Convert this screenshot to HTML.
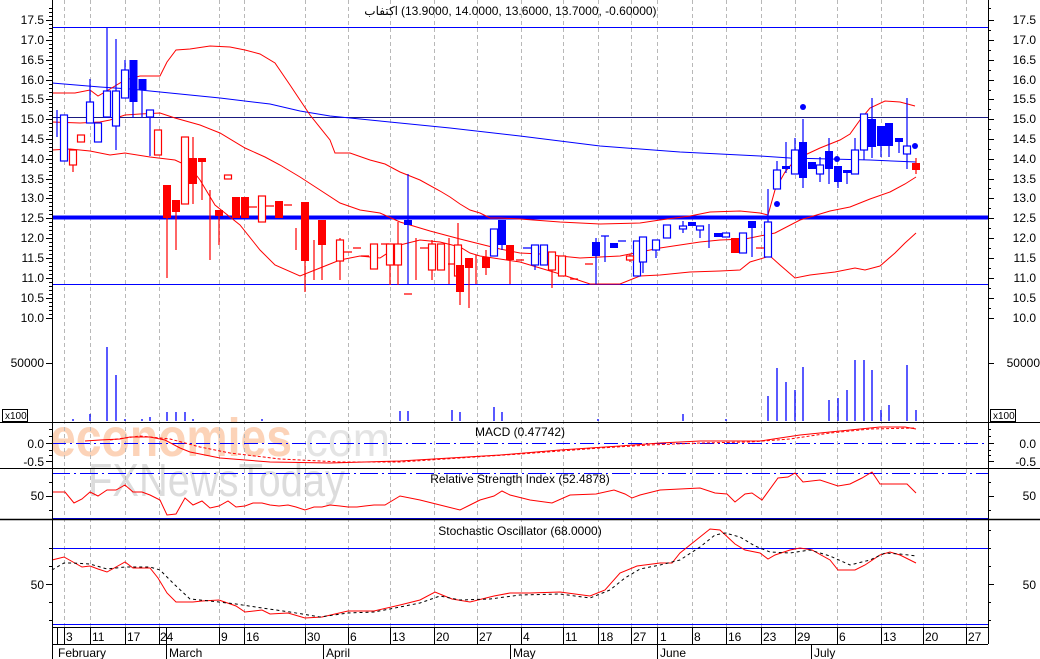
<!DOCTYPE html>
<html><head><meta charset="utf-8"><style>
html,body{margin:0;padding:0;background:#fff;width:1040px;height:659px;overflow:hidden}
svg{display:block;font-family:"Liberation Sans","Noto Sans CJK SC",sans-serif}
</style></head><body>
<svg width="1040" height="659" viewBox="0 0 1040 659" xmlns="http://www.w3.org/2000/svg">
<!-- watermark -->
<text x="50" y="456" font-size="54" fill="#fcd3b8" font-weight="bold" textLength="242" lengthAdjust="spacingAndGlyphs">economies</text>
<text x="293" y="456" font-size="48" fill="#e4e4e4" textLength="97" lengthAdjust="spacingAndGlyphs">.com</text>
<text x="88" y="496" font-size="46" fill="#dcdcdc" textLength="257" lengthAdjust="spacingAndGlyphs">FXNewsToday</text>

<!-- vertical grid -->
<g stroke="#b8b8b8" stroke-dasharray="4,3" stroke-width="1">
<path d="M64.5 0V627M90.5 0V627M125.5 0V627M159.5 0V627M219.5 0V627M244.5 0V627M305.5 0V627M348.5 0V627M390.5 0V627M434.5 0V627M477.5 0V627M521.5 0V627M563.5 0V627M598.5 0V627M631.5 0V627M657.5 0V627M692.5 0V627M726.5 0V627M761.5 0V627M795.5 0V627M837.5 0V627M881.5 0V627M923.5 0V627M966.5 0V627"/>
</g>

<!-- horizontal level lines -->
<g stroke="#0000ff">
<line x1="52" y1="27.5" x2="988" y2="27.5"/>
<line x1="52" y1="117.5" x2="988" y2="117.5" stroke="#1a1a80"/>
<line x1="52" y1="217.5" x2="988" y2="217.5" stroke-width="4"/>
<line x1="52" y1="284.5" x2="988" y2="284.5"/>
</g>

<!-- MA and bands -->
<polyline fill="none" stroke="#0000ff" points="52,83 100,87 130,89 160,92 220,98 270,104 300,111 330,116 380,121 450,128 520,136 600,146 680,152 760,156 790,158 870,160 916,162"/>
<g fill="none" stroke="#ff0000">
<polyline points="52,93 75,93 90,90 98,96 110,89 125,80 140,76 160,76 167,62 176,50 190,49 210,46 230,47 245,50 260,54 275,63 290,85 300,100 310,115 330,140 335,153 350,153 370,160 385,164 400,172 420,180 440,191 450,197 460,204 470,210 480,213 490,218 500,218 520,219 560,222 600,224 640,223 660,220 690,216 710,212 740,211 760,213 768,215 775,190 785,172 795,160 805,155 820,148 840,140 850,134 860,120 870,108 885,101 900,102 915,106"/>
<polyline points="52,122 80,123 100,122 110,120 125,115 140,114 160,113 175,118 200,125 220,133 245,148 265,157 280,165 300,177 320,190 340,203 360,210 380,213 400,222 430,231 460,239 480,244 500,249 520,253 540,254 580,258 620,256 640,252 660,248 680,245 700,242 720,240 745,239 765,235 775,233 800,220 830,211 850,207 870,199 890,192 905,184 916,177"/>
<polyline points="52,150 70,149 90,151 110,155 125,153 150,157 175,160 190,167 200,180 215,205 240,225 260,250 275,265 300,276 320,268 340,260 360,256 380,258 400,245 420,240 440,242 460,247 470,253 480,256 520,262 560,274 590,284 620,284 640,276 660,275 690,272 720,271 740,270 750,262 770,256 780,265 795,278 810,275 835,272 855,268 865,270 880,266 895,253 905,243 916,233"/>
</g>

<!-- candles: blue -->
<g stroke="#0000ff" stroke-width="1.2">
<path d="M57 110V137M64 115V161M90 79V123M98 123V142M107 28V117M116 39V150M125 60V98M133 60V118M142 79V118M150 110V156M408 174V284M494 229V256M502 220V250M527 248V248M535 245V270M544 245V265M596 238V284M605 236V262M614 243V248M637 241V276M643 237V273M656 240V258M667 225V238M683 221V233M692 222V226M700 226V238M709 224V248M718 233V237M726 233V237M743 233V253M752 221V257M768 189V257M777 161V189M786 142V173M795 138V174M803 119V188M812 162V169M820 157V182M829 138V184M838 166V188M847 170V184M855 138V174M864 114V160M872 98V158M881 126V157M889 123V157M899 138V153M907 98V169"/>
<path d="M523 248H531M601 236H609M618 241H626" />
</g>
<g stroke="#0000ff" fill="#fff" stroke-width="1.2">
<rect x="60.5" y="115" width="7" height="46"/><rect x="86.5" y="102" width="7" height="21"/><rect x="94.5" y="123" width="7" height="19"/><rect x="103.5" y="91" width="7" height="26"/><rect x="112.5" y="91" width="7" height="35"/><rect x="121.5" y="70" width="7" height="28"/><rect x="146.5" y="110" width="7" height="7"/>
<rect x="490.5" y="229" width="7" height="27"/><rect x="531.5" y="245" width="7" height="20"/><rect x="540.5" y="245" width="7" height="20"/><rect x="633.5" y="241" width="7" height="35"/><rect x="639.5" y="237" width="7" height="25"/><rect x="652.5" y="240" width="7" height="10"/><rect x="663.5" y="225" width="7" height="13"/><rect x="679.5" y="226" width="7" height="3"/><rect x="696.5" y="226" width="7" height="4"/><rect x="722.5" y="233" width="7" height="4"/><rect x="739.5" y="233" width="7" height="20"/><rect x="764.5" y="222" width="7" height="35"/><rect x="773.5" y="170" width="7" height="19"/><rect x="791.5" y="150" width="7" height="24"/><rect x="816.5" y="165" width="7" height="9"/><rect x="851.5" y="150" width="7" height="24"/><rect x="860.5" y="114" width="7" height="36"/><rect x="903.5" y="146" width="7" height="8"/>
</g>
<g fill="#0000ff">
<rect x="129.5" y="60" width="8" height="42"/><rect x="138.5" y="79" width="8" height="11"/><rect x="404" y="220" width="8" height="5"/><rect x="498" y="220" width="8" height="25"/><rect x="592" y="242" width="8" height="14"/><rect x="610" y="243" width="8" height="5"/><rect x="688" y="222" width="8" height="4"/><rect x="714" y="233" width="8" height="4"/><rect x="748" y="221" width="8" height="7"/><rect x="782" y="166" width="8" height="3"/><rect x="799" y="142" width="8" height="36"/><rect x="808" y="162" width="8" height="7"/><rect x="825" y="151" width="8" height="18"/><rect x="834" y="166" width="8" height="16"/><rect x="843" y="170" width="8" height="3"/><rect x="868" y="119" width="8" height="28"/><rect x="877" y="126" width="8" height="20"/><rect x="885" y="123" width="8" height="23"/><rect x="895" y="138" width="8" height="4"/>
<circle cx="803" cy="107" r="3"/><circle cx="777" cy="204" r="3"/><circle cx="837" cy="159" r="3"/><circle cx="915" cy="146" r="3"/>
</g>

<!-- candles: red -->
<g stroke="#ff0000" stroke-width="1.2">
<path d="M73 150V172M167 185V278M176 200V250M185 137V204M193 137V204M202 158V200M210 190V260M219 210V245M236 197V218M245 197V218M262 196V222M279 201V218M296 228V250M305 202V292M314 240V280M322 220V280M340 238V280M390 244V285M398 222V285M416 238V280M432 240V280M441 244V270M449 238V284M458 223V284M460 253V305M469 258V308M476 255V284M486 250V275M510 245V284M552 252V288M562 256V276M630 254V262M735 238V253M916 158V174"/>
<path d="M249 207H257M266 206H274M284 205H292M344 252H352M353 248H361M361 256H369M381 244H389M404 294H412M420 248H428M448 264H456M516 260H524M570 279H578M585 264H593M756 248H764"/>
</g>
<g stroke="#ff0000" fill="#fff" stroke-width="1.2">
<rect x="69.5" y="150" width="7" height="15"/><rect x="77.5" y="135" width="7" height="7"/><rect x="154.5" y="130" width="7" height="25"/><rect x="181.5" y="137" width="7" height="67"/><rect x="224.5" y="175" width="7" height="4"/><rect x="258.5" y="196" width="7" height="26"/><rect x="336.5" y="240" width="7" height="21"/><rect x="370.5" y="244" width="7" height="25"/><rect x="386.5" y="244" width="7" height="21"/><rect x="394.5" y="244" width="7" height="21"/><rect x="428.5" y="244" width="7" height="26"/><rect x="437.5" y="244" width="7" height="26"/><rect x="454.5" y="245" width="7" height="31"/><rect x="548.5" y="252" width="7" height="18"/><rect x="558.5" y="256" width="7" height="20"/><rect x="626.5" y="256" width="7" height="4"/>
</g>
<g fill="#ff0000">
<rect x="163" y="185" width="8" height="33"/><rect x="172" y="200" width="8" height="12"/><rect x="189" y="158" width="8" height="26"/><rect x="198" y="158" width="8" height="4"/><rect x="215" y="210" width="8" height="6"/><rect x="232" y="197" width="8" height="21"/><rect x="241" y="197" width="8" height="21"/><rect x="275" y="201" width="8" height="17"/><rect x="301" y="202" width="8" height="59"/><rect x="318" y="220" width="8" height="25"/><rect x="456" y="265" width="8" height="27"/><rect x="465" y="258" width="8" height="10"/><rect x="482" y="257" width="8" height="11"/><rect x="506" y="245" width="8" height="15"/><rect x="731" y="238" width="8" height="15"/><rect x="912" y="163" width="8" height="7"/>
</g>

<!-- volume -->
<g stroke="#0000ff" stroke-width="1.3">
<path d="M90 414V421M107 347V421M116 375V421M150 417V421M167 412V421M176 412V421M185 412V421M400 411V421M408 411V421M452 410V421M460 412V421M494 407V421M502 412V421M683 414V421M768 396V421M777 368V421M786 382V421M795 390V421M803 367V421M829 400V421M838 398V421M847 390V421M855 360V421M864 360V421M872 370V421M881 410V421M889 405V421M907 365V421M916 410V421M73 419V421M125 419V421M142 419V421M193 419V421M262 419V421M598 419V421M726 419V421"/>
</g>

<!-- MACD -->
<line x1="52" y1="443.5" x2="988" y2="443.5" stroke="#0000ff" stroke-dasharray="14,4,2,4"/>
<polyline fill="none" stroke="#ff0000" points="85,441 100,440 120,439 130,437 150,437 165,440 180,448 190,452 220,458 270,462 330,463 400,461 450,458 500,455 560,450 620,446 660,443 700,441 760,441 780,438 800,435 850,430 880,427 905,427 916,429"/>
<polyline fill="none" stroke="#ff0000" stroke-dasharray="3,2" points="110,440 140,436 170,439 200,447 230,453 280,459 340,462 400,462 460,458 520,454 600,448 650,445 700,443 750,442 790,439 830,433 870,429 916,428"/>

<!-- RSI -->
<line x1="52" y1="473.5" x2="988" y2="473.5" stroke="#0000ff" stroke-dasharray="18,4,2,4"/>
<line x1="52" y1="518.5" x2="988" y2="518.5" stroke="#0000ff"/>
<polyline fill="none" stroke="#ff0000" points="52,492 65,492 74,503 82,499 90,492 98,496 107,490 116,490 125,485 133,492 142,492 150,495 160,500 167,515 176,514 185,498 193,505 202,501 210,508 219,506 228,501 236,507 245,506 253,503 262,503 270,505 279,506 288,505 296,507 305,510 314,507 322,507 330,505 340,506 348,507 357,507 365,506 374,505 385,505 400,496 420,500 440,505 460,510 470,505 480,500 494,496 502,491 510,495 530,500 552,503 570,495 596,494 614,490 625,494 632,498 640,495 660,490 700,488 715,493 727,494 735,502 745,494 752,493 762,500 778,478 788,477 795,473 803,482 820,480 838,486 850,484 862,478 872,472 880,484 889,484 896,484 907,484 916,493"/>

<!-- Stochastic -->
<line x1="52" y1="548.5" x2="988" y2="548.5" stroke="#0000ff"/>
<line x1="52" y1="624.5" x2="988" y2="624.5" stroke="#0000ff"/>
<polyline fill="none" stroke="#ff0000" points="52,560 64,557 73,562 82,567 90,566 98,569 107,572 116,567 125,562 133,568 150,568 158,578 167,593 176,602 193,602 202,601 219,600 236,606 245,612 262,610 270,614 288,613 305,618 322,617 348,611 374,611 400,605 420,600 435,592 452,599 470,602 494,596 510,593 530,593 560,592 590,596 605,590 620,573 637,566 660,563 672,563 680,553 700,537 710,529 720,530 735,544 745,550 760,553 768,559 775,555 790,550 800,548 812,550 830,560 838,570 855,570 865,565 880,555 890,552 900,555 916,563"/>
<polyline fill="none" stroke="#000" stroke-dasharray="3,3" points="52,570 64,563 73,563 90,564 107,569 125,567 150,567 160,570 175,585 190,599 210,601 236,604 262,608 290,612 320,617 348,613 374,612 400,607 420,603 440,596 460,600 490,599 520,595 560,594 590,598 610,590 625,578 640,569 660,565 680,560 700,547 715,535 725,533 740,537 755,546 770,552 790,553 810,550 830,556 850,565 870,560 885,553 900,554 916,556"/>

<!-- panel borders -->
<g stroke="#000" stroke-width="1">
<line x1="0" y1="422.5" x2="1040" y2="422.5"/>
<line x1="0" y1="468.5" x2="1040" y2="468.5"/>
<line x1="0" y1="519.5" x2="1040" y2="519.5" stroke-width="1.5"/>
<line x1="52.5" y1="0" x2="52.5" y2="659"/>
<line x1="988.5" y1="0" x2="988.5" y2="627"/>
<line x1="52" y1="627.5" x2="988" y2="627.5"/>
<line x1="52" y1="644.5" x2="988" y2="644.5"/>
</g>
<!-- ticks left/right -->
<g stroke="#000">
<path d="M46 20.5h6M46 40.5h6M46 60.5h6M46 80.5h6M46 99.5h6M46 119.5h6M46 139.5h6M46 159.5h6M46 179.5h6M46 198.5h6M46 218.5h6M46 238.5h6M46 258.5h6M46 278.5h6M46 298.5h6M46 318.5h6M49 8.5h3M49 12.5h3M49 16.5h3M49 24.5h3M49 28.5h3M49 32.5h3M49 36.5h3M49 44.5h3M49 48.5h3M49 52.5h3M49 56.5h3M49 64.5h3M49 68.5h3M49 72.5h3M49 76.5h3M49 84.5h3M49 88.5h3M49 92.5h3M49 96.5h3M49 103.5h3M49 107.5h3M49 111.5h3M49 115.5h3M49 123.5h3M49 127.5h3M49 131.5h3M49 135.5h3M49 143.5h3M49 147.5h3M49 151.5h3M49 155.5h3M49 163.5h3M49 167.5h3M49 171.5h3M49 175.5h3M49 183.5h3M49 187.5h3M49 191.5h3M49 195.5h3M49 202.5h3M49 206.5h3M49 210.5h3M49 214.5h3M49 222.5h3M49 226.5h3M49 230.5h3M49 234.5h3M49 242.5h3M49 246.5h3M49 250.5h3M49 254.5h3M49 262.5h3M49 266.5h3M49 270.5h3M49 274.5h3M49 282.5h3M49 286.5h3M49 290.5h3M49 294.5h3M49 302.5h3M49 306.5h3M49 310.5h3M49 314.5h3M46 363.5h6M46 443.5h6M46 461.5h6M46 496.5h6M46 584.5h6M49 429.5h3M49 436.5h3M49 450.5h3M49 455.5h3M49 482.5h3M49 510.5h3M49 548.5h3M49 566.5h3M49 602.5h3M49 620.5h3"/>
<path d="M988 20.5h6M988 40.5h6M988 60.5h6M988 80.5h6M988 99.5h6M988 119.5h6M988 139.5h6M988 159.5h6M988 179.5h6M988 198.5h6M988 218.5h6M988 238.5h6M988 258.5h6M988 278.5h6M988 298.5h6M988 318.5h6M988 363.5h6M988 443.5h6M988 461.5h6M988 496.5h6M988 584.5h6M988 8.5h3M988 30.5h3M988 50.5h3M988 70.5h3M988 90.5h3M988 109.5h3M988 129.5h3M988 149.5h3M988 169.5h3M988 188.5h3M988 208.5h3M988 228.5h3M988 248.5h3M988 268.5h3M988 288.5h3M988 308.5h3M988 429.5h3M988 436.5h3M988 450.5h3M988 455.5h3M988 482.5h3M988 510.5h3M988 530.5h3M988 548.5h3M988 566.5h3M988 602.5h3M988 620.5h3"/>
</g>
<!-- x100 boxes -->
<rect x="2.5" y="409.5" width="25" height="12" fill="#fff" stroke="#000"/>
<text x="5" y="419" font-size="10">x100</text>
<rect x="990.5" y="409.5" width="25" height="12" fill="#fff" stroke="#000"/>
<text x="993" y="419" font-size="10">x100</text>

<!-- axis labels -->
<g font-size="12" fill="#000" text-anchor="end">
<text x="44" y="24">17.5</text><text x="44" y="44">17.0</text><text x="44" y="64">16.5</text><text x="44" y="84">16.0</text><text x="44" y="103">15.5</text><text x="44" y="123">15.0</text><text x="44" y="143">14.5</text><text x="44" y="163">14.0</text><text x="44" y="183">13.5</text><text x="44" y="202">13.0</text><text x="44" y="222">12.5</text><text x="44" y="242">12.0</text><text x="44" y="262">11.5</text><text x="44" y="282">11.0</text><text x="44" y="302">10.5</text><text x="44" y="322">10.0</text>
<text x="44" y="367">50000</text><text x="44" y="448">0.0</text><text x="44" y="466">-0.5</text><text x="44" y="500">50</text><text x="44" y="589">50</text>
</g>
<g font-size="12" fill="#000" text-anchor="end">
<text x="1036" y="24">17.5</text><text x="1036" y="44">17.0</text><text x="1036" y="64">16.5</text><text x="1036" y="84">16.0</text><text x="1036" y="103">15.5</text><text x="1036" y="123">15.0</text><text x="1036" y="143">14.5</text><text x="1036" y="163">14.0</text><text x="1036" y="183">13.5</text><text x="1036" y="202">13.0</text><text x="1036" y="222">12.5</text><text x="1036" y="242">12.0</text><text x="1036" y="262">11.5</text><text x="1036" y="282">11.0</text><text x="1036" y="302">10.5</text><text x="1036" y="322">10.0</text>
<text x="1040" y="367">50000</text><text x="1036" y="448">0.0</text><text x="1036" y="466">-0.5</text><text x="1036" y="500">50</text><text x="1036" y="589">50</text>
</g>

<!-- titles -->
<g font-size="12" fill="#000">
<text x="398" y="15" text-anchor="end">اكتفاب</text>
<text x="401" y="15">(13.9000, 14.0000, 13.6000, 13.7000, -0.60000)</text>
<text x="520" y="436" text-anchor="middle">MACD (0.47742)</text>
<text x="520" y="483" text-anchor="middle">Relative Strength Index (52.4878)</text>
<text x="520" y="535" text-anchor="middle">Stochastic Oscillator (68.0000)</text>
</g>

<!-- date axis -->
<g stroke="#000">
<path d="M57.5 627V644M64.5 627V644M90.5 627V644M125.5 627V644M159.5 627V644M166.5 627V659M219.5 627V644M244.5 627V644M305.5 627V644M323.5 644V659M348.5 627V644M390.5 627V644M434.5 627V644M477.5 627V644M510.5 644V659M521.5 627V644M563.5 627V644M598.5 627V644M631.5 627V644M657.5 627V659M692.5 627V644M726.5 627V644M761.5 627V644M795.5 627V644M811.5 644V659M837.5 627V644M881.5 627V644M923.5 627V644M966.5 627V644M988.5 627V644"/>
</g>
<g font-size="12" fill="#000">
<text x="66" y="641">3</text><text x="92" y="641">11</text><text x="127" y="641">17</text><text x="160" y="641">24</text><text x="221" y="641">9</text><text x="246" y="641">16</text><text x="307" y="641">30</text><text x="350" y="641">6</text><text x="392" y="641">13</text><text x="436" y="641">20</text><text x="479" y="641">27</text><text x="523" y="641">4</text><text x="565" y="641">11</text><text x="600" y="641">18</text><text x="633" y="641">27</text><text x="660" y="641">1</text><text x="694" y="641">8</text><text x="728" y="641">16</text><text x="763" y="641">23</text><text x="797" y="641">29</text><text x="839" y="641">6</text><text x="883" y="641">13</text><text x="925" y="641">20</text><text x="968" y="641">27</text>
<text x="58" y="657">February</text><text x="169" y="657">March</text><text x="326" y="657">April</text><text x="513" y="657">May</text><text x="660" y="657">June</text><text x="814" y="657">July</text>
</g>
</svg>
</body></html>
